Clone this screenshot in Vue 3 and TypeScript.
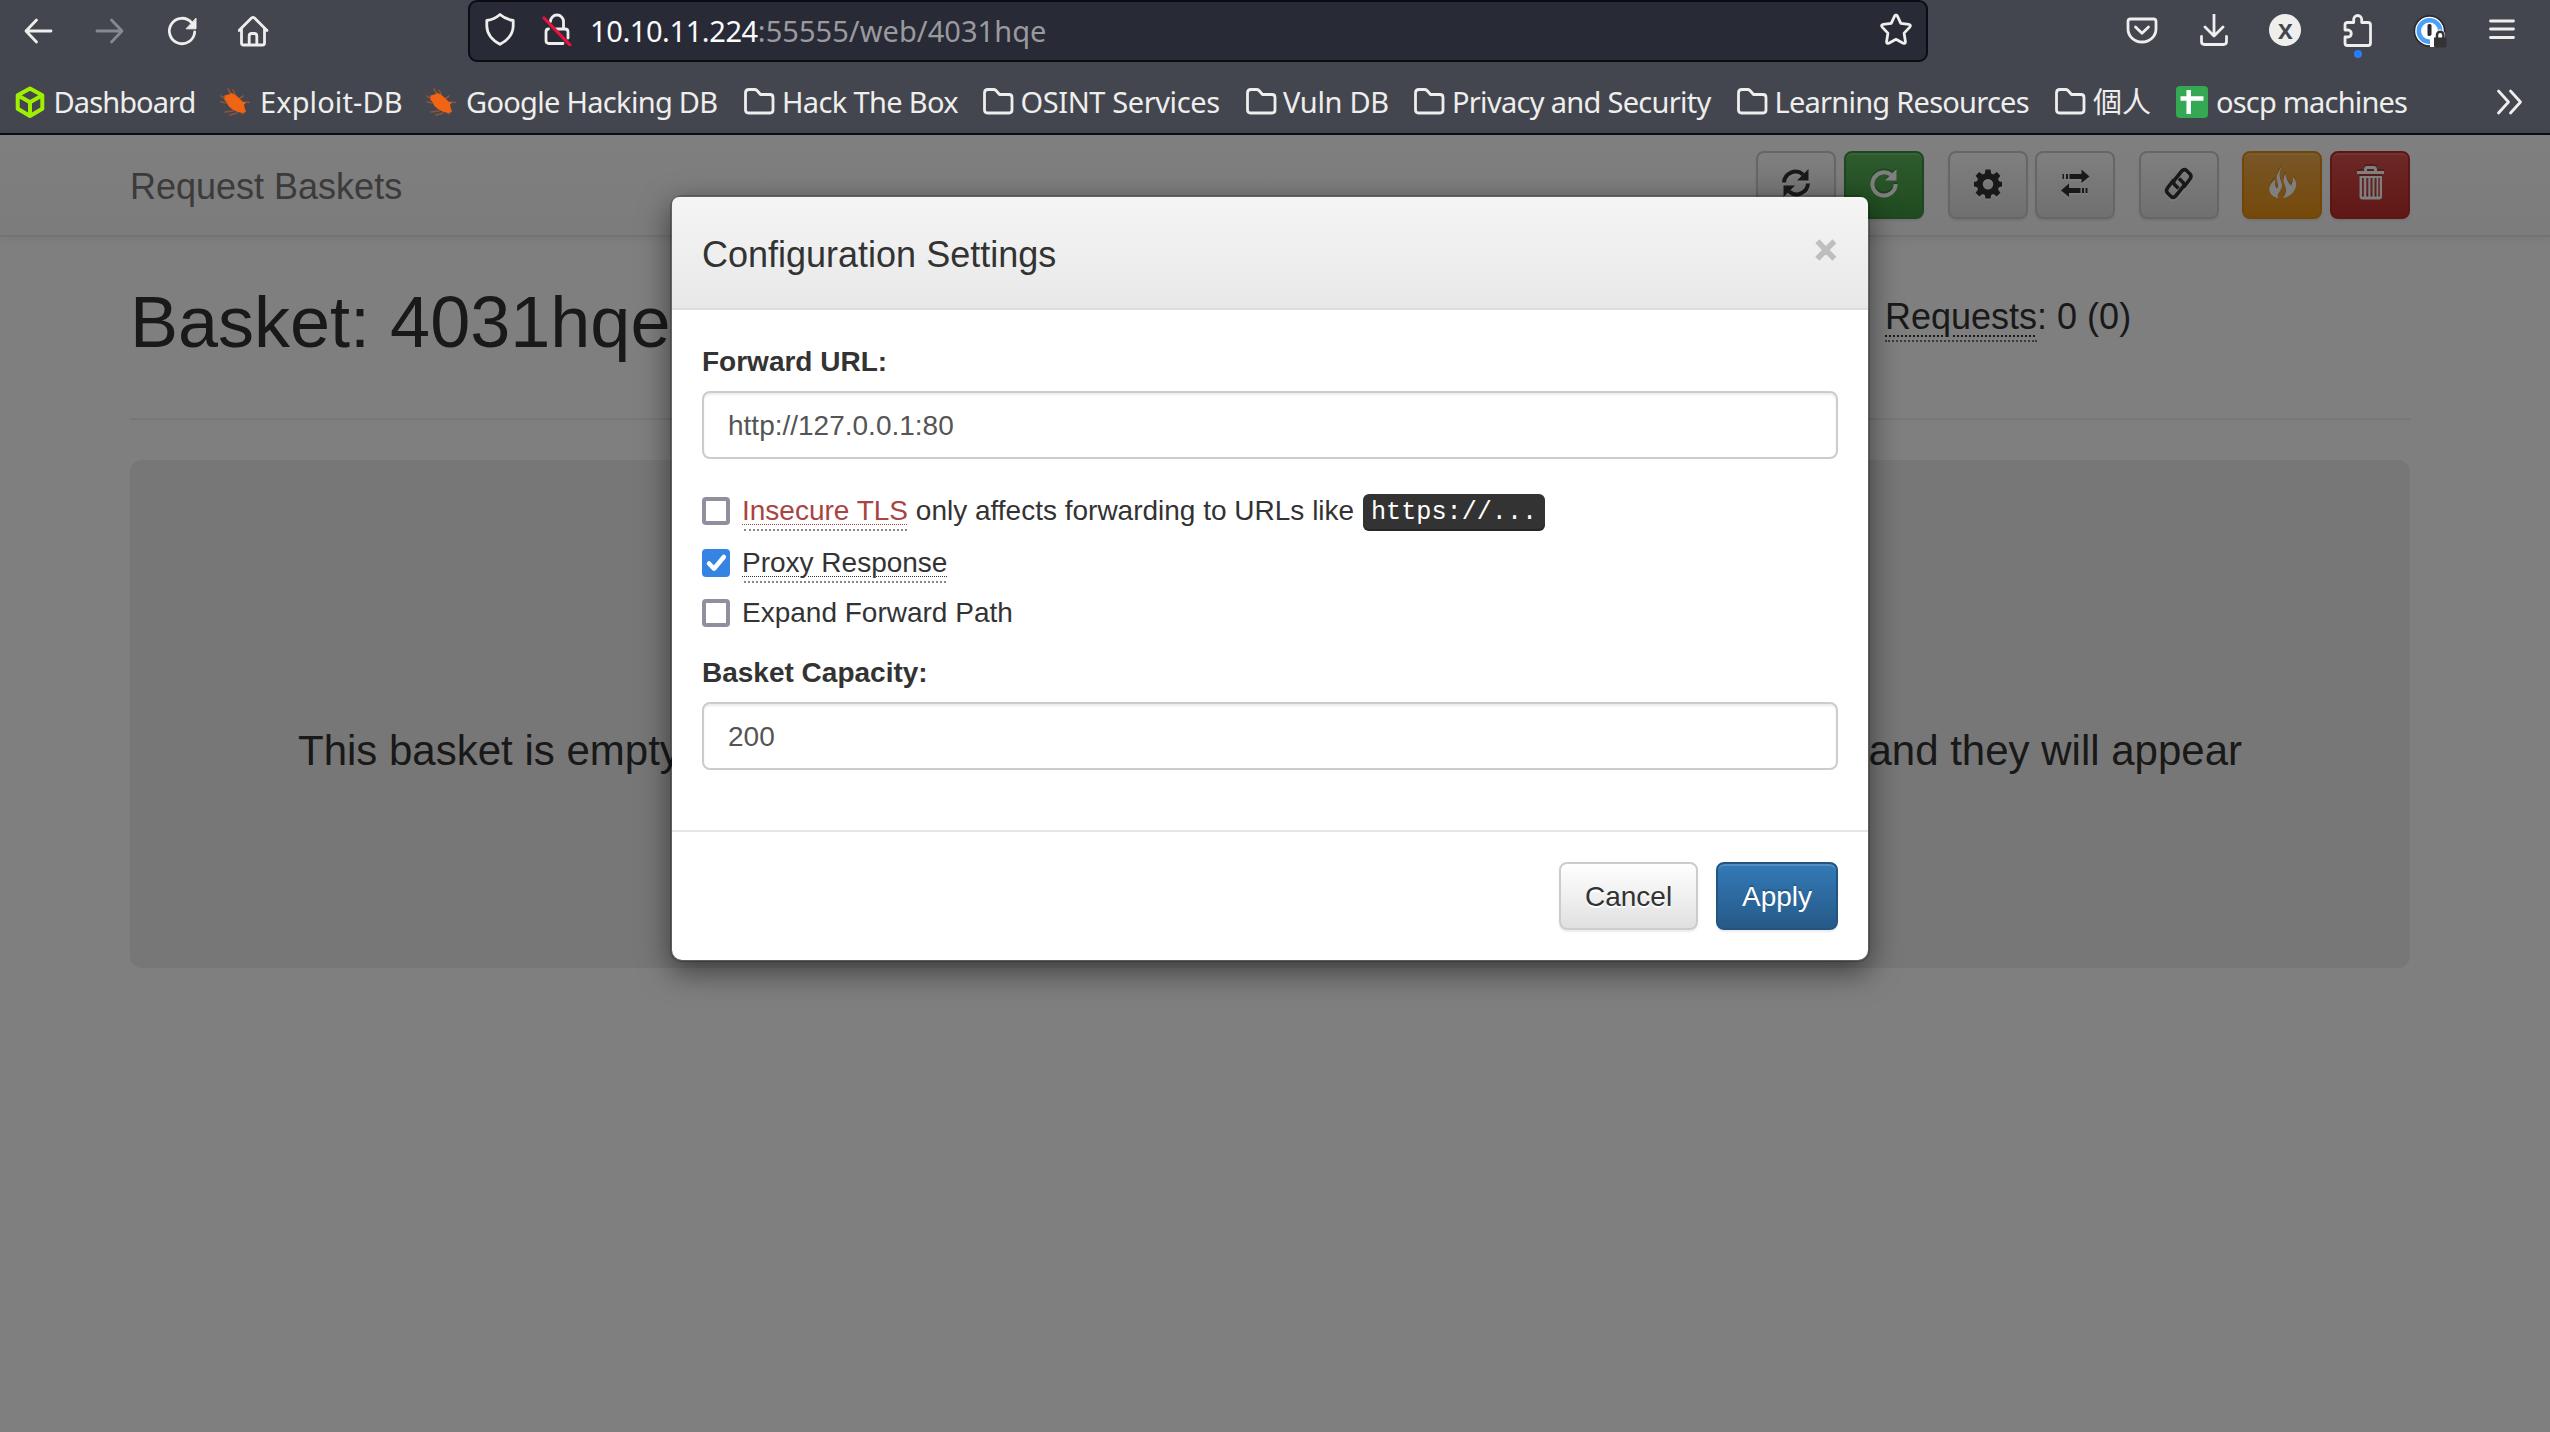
<script setup lang="ts">
import { ref } from 'vue'

interface Bookmark {
  label: string
  icon: 'cube' | 'bug' | 'folder' | 'sheet'
  width: number
  gap: number
  spacing: number
}

const bookmarks: Bookmark[] = [
  { label: 'Dashboard', icon: 'cube', width: 204, gap: 7.5, spacing: -0.9 },
  { label: 'Exploit-DB', icon: 'bug', width: 206, gap: 10, spacing: 0.1 },
  { label: 'Google Hacking DB', icon: 'bug', width: 319, gap: 10, spacing: -0.7 },
  { label: 'Hack The Box', icon: 'folder', width: 239, gap: 7, spacing: -0.65 },
  { label: 'OSINT Services', icon: 'folder', width: 263, gap: 6.5, spacing: -0.4 },
  { label: 'Vuln DB', icon: 'folder', width: 168, gap: 6, spacing: -0.3 },
  { label: 'Privacy and Security', icon: 'folder', width: 323, gap: 7, spacing: -0.7 },
  { label: 'Learning Resources', icon: 'folder', width: 318, gap: 6.5, spacing: -0.75 },
  { label: '個人', icon: 'folder', width: 122, gap: 7, spacing: 0 },
  { label: 'oscp machines', icon: 'sheet', width: 240, gap: 8, spacing: -0.8 },
]

const forwardUrl = ref('http://127.0.0.1:80')
const capacity = ref('200')
const insecureTls = ref(false)
const proxyResponse = ref(true)
const expandPath = ref(false)
</script>

<template>
  <div class="window">
    <header class="chrome">
      <div class="toolbar">
        <div class="nav">
          <svg width="32" height="32" viewBox="0 0 32 32"><path d="M29 16H4M14.500 5L4 16l10.500 11" /></svg>
          <svg class="dim" width="32" height="32" viewBox="0 0 32 32"><path d="M3 16h25M17.500 5L28 16 17.500 27" /></svg>
          <svg width="32" height="32" viewBox="0 0 32 32"><path d="M25.500 7.500A12.700 12.700 0 1 0 28.700 17" /><path class="solid" d="M30 3.500v10.300h-9.600z" /></svg>
          <svg width="32" height="32" viewBox="1 0 32 32"><path d="M2 15.500L14.500 3q1.500-1.300 3 0L30 15.500M4.500 13.500V28q0 2 2 2h19q2 0 2-2V13.500M12.200 30V21q0-2.500 2.500-2.500h2.600q2.500 0 2.500 2.500v9" /></svg>
        </div>
        <div class="urlbar">
          <svg class="shield" width="32" height="34" viewBox="0 0 32 34"><path d="M16 2.500c4 3.500 8 5.200 13.200 6v5.500C29 22 25 27.500 16 32.300 7 27.500 3 22 2.800 14V8.500C8 7.700 12 6 16 2.500z" /></svg>
          <svg class="lock" width="32" height="34" viewBox="0 0 32 34"><path d="M9.500 9.500a6.500 6.500 0 0 1 13 0V16M15 17h9q3 0 3 3v6M22 31.500H8q-3 0-3-3V20q0-3 2.500-3" /><path class="strike" d="M3 6l26 27" /></svg>
          <div class="url"><b>10.10.11.224</b><span>:55555/web/4031hqe</span></div>
          <svg class="star" width="34" height="34" viewBox="0 0 34 34"><path d="M15.700 3.800q1.300-2 2.600 0l3.500 7.600 8 1q2.600.5 1 2.700l-5.700 6 1.300 8.400q.2 2.500-2.200 1.700L17 27.300l-7.200 3.900q-2.400.8-2.200-1.700l1.300-8.400-5.700-6q-1.600-2.200 1-2.700l8-1z" /></svg>
        </div>
        <div class="tools">
          <svg width="34" height="34" viewBox="0 0 34 34"><path d="M5.500 5h23q2.500 0 2.500 2.500v7.500a14 13 0 0 1-28 0V7.500q0-2.500 2.500-2.500zM10.500 13l6.500 6.300 6.500-6.300" /></svg>
          <svg width="34" height="34" viewBox="0 0 34 34"><path d="M17 .500V22M8 13l9 9 9-9M4.500 22.500v5q0 3 3 3h19q3 0 3-3v-5" /></svg>
          <div class="badge">X</div>
          <svg width="34" height="34" viewBox="0 0 34 34"><path d="M4 16V11q0-2.500 2.500-2.500h6.200V5.500a4 4 0 0 1 8 0v3h6.300q2.500 0 2.500 2.500v18q0 2.500-2.500 2.500H6.500q-2.500 0-2.500-2.500v-6h3.500a3.600 3.600 0 0 0 0-7z" /></svg>
          <svg width="34" height="34" viewBox="0 0 34 34">
            <circle class="k" cx="16.500" cy="17" r="16" /><circle class="w" cx="16.500" cy="17" r="14.300" />
            <circle class="ring" cx="16.500" cy="17" r="10.700" /><rect class="k" x="14.500" y="10" width="4" height="12" rx="1.500" />
            <path class="w" d="M17 33V22l4-3 6-4 5 4v14z" /><path class="k" d="M21 23.500h12.500V32q0 1.500-1.500 1.500h-9.500q-1.500 0-1.500-1.500z" /><path class="shackle" d="M24 24v-3a3.200 3.200 0 0 1 6.400 0v3" />
          </svg>
          <svg width="34" height="34" viewBox="0 0 34 34"><path d="M5.500 7h23M5.500 15h23M5.500 23.500h23" /></svg>
          <i class="dot"></i>
        </div>
      </div>
      <nav class="bookmarks">
        <div v-for="b in bookmarks" :key="b.label" class="bookmark" :style="{ width: b.width + 'px' }">
          <svg v-if="b.icon === 'cube'" class="cube" width="32" height="34" viewBox="0 0 32 34"><path d="M16 3.500l12.300 6.800v13.500L16 31 3.700 23.800V10.300zM3.700 10.300L16 17.300l12.300-7M16 17.300V31" /></svg>
          <svg v-else-if="b.icon === 'bug'" class="bug" width="32" height="34" viewBox="0 0 32 34"><path class="legs" d="M10 4l3 5M15 5l2 4M3 11l5 3M7 27l8-1M12 30l7-2M25 11l-4 3M27 17l5 .5M25 29l-3-3M3 17l6 1" /><path class="body" d="M6.500 10.500l4-1 3-1.500 3.500 1.500 4.500 4 3 3 3.500 1-2 2.500 1 4 1 2.500-2 1.500-4-.500-3.500-1-4-2-4-3.500-2-4-2-2z" /></svg>
          <svg v-else-if="b.icon === 'folder'" class="folder" width="32" height="34" viewBox="0 0 32 34"><path d="M2.500 8q0-3.500 3.500-3.500h5.500q1.500 0 2.500 1l3.500 4H27q3 0 3 3V25q0 3-3 3H5.500q-3 0-3-3z" /></svg>
          <svg v-else class="sheet" width="32" height="34" viewBox="0 0 32 34"><rect y="1" width="32" height="32" rx="4" /><path d="M12.700 5v24M4.500 13.500h23" /></svg>
          <span :style="{ marginLeft: b.gap + 'px', letterSpacing: b.spacing + 'px' }">{{ b.label }}</span>
        </div>
        <svg class="more" width="30" height="30" viewBox="0 0 30 30"><path d="M3.500 4l10 11-10 11M15.500 4l10 11-10 11" /></svg>
      </nav>
    </header>

    <main class="page">
      <div class="navbar">
        <span class="brand">Request Baskets</span>
        <div class="actions">
          <button class="btn icon"><svg viewBox="0 0 32 32"><path class="ln" d="M4 15.500A11.500 11.500 0 0 1 23 7.500M28 16.500A11.500 11.500 0 0 1 9 24.500" /><path d="M28.500 2v11.500H17zM3.500 30V18.500H15z" /></svg></button>
          <button class="btn icon success"><svg viewBox="0 0 32 32"><path class="ln" d="M23 7.700A11.600 11.600 0 1 0 27.600 17" /><path d="M28.500 2v11.500H17z" /></svg></button>
          <button class="btn icon g24"><svg viewBox="0 0 32 32"><path fill-rule="evenodd" d="M13.500 2.500h5l.7 4 2.300 1 3.300-2.400 3.600 3.600L26 12l1 2.300 3 .7v4.500l-3 .7-1 2.300 2.400 3.300-3.600 3.600-3.300-2.400-2.300 1-.7 3.500h-5l-.7-3.500-2.300-1-3.300 2.400-3.600-3.600L6 22.500l-1-2.300-3-.7V15l3-.7L6 12 3.600 8.700l3.600-3.600L10.500 7.500l2.300-1zM16 12a5 5 0 1 0 0 10.500A5 5 0 0 0 16 12z" /></svg></button>
          <button class="btn icon g7"><svg viewBox="0 0 32 32"><path d="M22.500 2.500l8 7-8 6.500v-4H10.500V7h12zM3.500 7H5v5H3.500zM7 7h2v5H7zM10 16.500l-8 7 8 6.500v-4h11.500v-5H10zM23 21h2v5h-2zM26.500 21h2v5h-2z" /></svg></button>
          <button class="btn icon g24"><svg viewBox="0 0 32 32"><path class="link" d="M20.500 20.500l6.500-8.500q2-2.800 0-5l-3.500-3.500q-2.500-2-4.700.500l-7.300 9q-1.800 2.500 0 4.500l4 4" /><path class="link" d="M11 12.500L4.500 21q-2 2.800 0 5L8 29.500q2.500 2 4.700-.500l7.300-9q1.800-2.500 0-4.500l-4-4" /></svg></button>
          <button class="btn icon warning g23"><svg viewBox="0 0 32 32"><path d="M15.500 0c-5 7-5.500 11-4 15 .8 2.500 1 4.500-.500 6.500-2-2-2.500-5-2-9.500C5 16 3 19 3.300 22.500 3.600 27 7.500 30.500 12.500 31c-1.500-2-1-3.500.800-6 3-4 3.500-7 1.500-11.500-1.800-4.500-1.500-8 .7-13.500zM19.500 6.500c-1.500 3-2.500 6-1.500 9.500 1 3 2.500 5 2 8-.4 2.500-1.500 4.500-3 7 6.500-1 12-6 13-12 .5-3.500-.5-6.500-3-9.500.3 4-.5 6.500-2 9-3-3-4.500-6.500-5.500-12z" /></svg></button>
          <button class="btn icon danger g8"><svg viewBox="0 0 32 32"><path class="ln3" d="M3 5.500h27M11.500 5V2.500q0-2 2-2h6q2 0 2 2V5" /><path fill-rule="evenodd" d="M5.500 9H28v20.500q0 3-3 3H8.500q-3 0-3-3zM8 11v18.500h1.800V11zM12.300 11v18.500h2V11zM16.500 11v18.500h2V11zM20.500 11v18.500h2V11zM24.300 11v18.500h1.500V11z" /></svg></button>
        </div>
      </div>
      <div class="container">
        <div class="heading">
          <h1>Basket: 4031hqe</h1>
          <div class="count"><span class="abbr">Requests</span>: 0 (0)</div>
        </div>
        <div class="jumbotron">
          <div class="line"><span>This basket is empty, send requests to</span><span>http://10.10.11.224:55555/4031hqe</span><span>and they will appear</span></div>
        </div>
      </div>

      <div class="backdrop">
        <section class="modal">
          <div class="modal-head">
            <h4>Configuration Settings</h4>
            <button class="close">×</button>
          </div>
          <div class="modal-body">
            <label class="title">Forward URL:</label>
            <input v-model="forwardUrl" class="field" type="text" />
            <div class="checks">
              <label class="check"><i class="box" :class="{ on: insecureTls }"></i><span><span class="abbr red">Insecure TLS</span> only affects forwarding to URLs like <kbd>https://...</kbd></span></label>
              <label class="check tall"><i class="box" :class="{ on: proxyResponse }"><svg v-if="proxyResponse" viewBox="0 0 28 28"><path d="M7 14.500l5 5.200L21.800 8" /></svg></i><span><span class="abbr">Proxy Response</span></span></label>
              <label class="check"><i class="box" :class="{ on: expandPath }"></i><span>Expand Forward Path</span></label>
            </div>
            <label class="title">Basket Capacity:</label>
            <input v-model="capacity" class="field" type="text" />
          </div>
          <div class="modal-foot">
            <button class="btn">Cancel</button>
            <button class="btn primary">Apply</button>
          </div>
        </section>
      </div>
    </main>
  </div>
</template>

<style>
body { overflow: hidden; background: #fff; }
</style>

<style scoped>
* { box-sizing: border-box; }
.window { width: 2550px; height: 1432px; display: flex; flex-direction: column; overflow: hidden; font-family: "Liberation Sans", Arial, sans-serif; color: #333; }
svg { display: block; flex: none; }

/* browser chrome */
.chrome { height: 135px; flex: none; background: #44464f; border-bottom: 2px solid #0c0c12; color: #eeeeec; font-family: "Noto Sans", "Noto Sans CJK TC", sans-serif; }
.chrome path { fill: none; stroke: #eeeeec; stroke-width: 2.8; stroke-linecap: round; stroke-linejoin: round; }
.toolbar { height: 62px; display: flex; align-items: flex-start; }
.nav { width: 468px; padding: 15px 0 0 22px; display: flex; gap: 40px; }
.nav .dim { opacity: .4; }
.chrome path.solid { fill: #eeeeec; stroke-width: 1; }
.urlbar { width: 1460px; height: 62px; display: flex; background: #282a36; border: 2px solid #0c0c12; border-radius: 9px; padding: 10px 13px 0 14px; }
.lock { margin-left: 25px; }
.chrome .lock .strike { stroke: #e8133c; stroke-width: 3.2; }
.url { margin-left: 17px; margin-top: -1px; font-size: 29px; line-height: 40px; color: #9a9a9e; flex: 1; white-space: pre; }
.url b { font-weight: 400; color: #fbfbfe; letter-spacing: -.4px; }
.url span { letter-spacing: .05px; }
.tools { position: relative; width: 622px; display: flex; padding: 14px 0 0 197px; gap: 38.200px; }
.badge { width: 32px; height: 32px; margin: 0 1px 0 0; border-radius: 50%; background: #eeeeec; color: #44464f; font-size: 22px; font-weight: 700; line-height: 33px; text-align: center; }
.dot { position: absolute; left: 426px; top: 50px; width: 8px; height: 8px; border-radius: 50%; background: #2a7cff; }
.k { fill: #2b2b2f; }
.chrome path.k { fill: #333; stroke: none; }
.w { fill: #fff; }
.chrome path.w { fill: #fff; stroke: none; }
.ring { fill: none; stroke: #4aa0f8; stroke-width: 4.500; }
.chrome path.shackle { stroke: #333; stroke-width: 2.500; }

.bookmarks { height: 71px; padding: 0 25px 0 14px; display: flex; align-items: flex-start; }
.bookmark { flex: none; display: flex; padding-top: 23px; font-size: 29px; line-height: 36px; white-space: pre; }
.bookmark span { margin-top: -1px; }
.chrome .cube path { stroke: #9fef00; stroke-width: 4; }
.chrome .bug .body { fill: #f06414; stroke: none; }
.chrome .bug .legs { stroke: #8d5438; stroke-width: 1.600; }
.sheet rect { fill: #34a853; }
.chrome .sheet path { stroke: #fff; stroke-width: 4.500; stroke-linecap: butt; }
.more { margin: 25px 0 0 auto; }

/* page */
.page { position: relative; flex: 1; background: #fff; }
.navbar { height: 102px; padding: 16px 140px 0 130px; display: flex; justify-content: space-between; background: linear-gradient(#fff, #f8f8f8); border-bottom: 2px solid #e7e7e7; box-shadow: 0 2px 10px rgba(0, 0, 0, .075); }
.brand { font-size: 36px; line-height: 40px; margin-top: 16px; color: #777; }
.actions { display: flex; gap: 0; }
.btn { height: 68px; padding: 2px 24px 0; border: 2px solid #ccc; border-radius: 8px; background: linear-gradient(#fff, #e0e0e0); box-shadow: inset 0 2px 0 rgba(255, 255, 255, .15), 0 2px 2px rgba(0, 0, 0, .075); font: 28px/62px "Liberation Sans", Arial, sans-serif; color: #333; text-shadow: 0 2px 0 #fff; }
.icon { width: 80px; padding: 0 0 4px; display: flex; align-items: center; justify-content: center; margin-left: 8px; }
.icon svg { width: 32px; height: 32px; fill: currentColor; filter: drop-shadow(0 2px 0 rgba(255, 255, 255, .8)); overflow: visible; }
.g24 { margin-left: 24px; } .g23 { margin-left: 23px; } .g7 { margin-left: 7px; }
.ln { fill: none; stroke: currentColor; stroke-width: 4; }
.ln3 { fill: none; stroke: currentColor; stroke-width: 3; }
.link { fill: none; stroke: currentColor; stroke-width: 3.600; }
.success, .warning, .danger, .primary { color: #fff; text-shadow: 0 -2px 0 rgba(0, 0, 0, .2); }
.success svg, .warning svg, .danger svg { filter: drop-shadow(0 -2px 0 rgba(0, 0, 0, .2)); }
.success { background: linear-gradient(#5cb85c, #419641); border-color: #3e8f3e; }
.warning { background: linear-gradient(#f0ad4e, #eb9316); border-color: #e38d13; }
.danger { background: linear-gradient(#d9534f, #c12e2a); border-color: #b92c28; }
.primary { background: linear-gradient(#337ab7, #265a88); border-color: #245580; }

.container { width: 2280px; margin-left: 130px; }
.heading { height: 183px; display: flex; justify-content: space-between; border-bottom: 2px solid #eee; }
h1 { margin: 45px 0 0; font-size: 72px; font-weight: 400; line-height: 80px; }
.count { width: 525px; margin-top: 60px; font-size: 36px; line-height: 40px; }
.abbr { position: relative; text-decoration: underline dotted 2px; text-underline-offset: 6px; }
.abbr::after { content: ""; position: absolute; left: 0; right: 0; bottom: -5px; border-bottom: 2px dotted #777; }
.jumbotron { height: 508px; margin-top: 40px; padding: 261px 168px 0 168px; border-radius: 12px; background: #eee; }
.line { display: flex; justify-content: space-between; font-size: 42px; line-height: 60px; white-space: nowrap; }

/* dialog */
.backdrop { position: absolute; inset: 0; background: rgba(0, 0, 0, .5); padding-top: 60px; }
.modal { width: 1200px; margin-left: 670px; background: #fff; background-clip: padding-box; border: 2px solid rgba(0, 0, 0, .2); border-radius: 12px; box-shadow: 0 10px 30px rgba(0, 0, 0, .5); }
.modal-head { height: 113px; padding: 0 33px 0 30px; display: flex; justify-content: space-between; background: linear-gradient(#f5f5f5, #e8e8e8); border-bottom: 2px solid #ddd; border-radius: 7px 7px 0 0; }
h4 { margin: 38px 0 0; font-size: 36px; font-weight: 400; line-height: 40px; }
.close { margin: 32px -2px 0 0; padding: 0; height: 42px; border: 0; background: none; font: 700 38px/42px "Liberation Sans", Arial, sans-serif; color: #000; -webkit-text-stroke: 1.500px #000; opacity: .2; }
.modal-body { height: 520px; padding: 32px 30px 0; font-size: 28px; }
.title { display: block; font-weight: 700; line-height: 40px; margin-bottom: 9px; }
.field { display: block; width: 100%; height: 68px; padding: 2px 24px 0; border: 2px solid #ccc; border-radius: 8px; font: 28px "Liberation Sans", Arial, sans-serif; color: #555; background: #fff; box-shadow: inset 0 2px 2px rgba(0, 0, 0, .075); outline: 0; }
.checks { padding-top: 32px; height: 194px; line-height: 40px; }
.check { display: flex; height: 52px; }
.check.tall { height: 50px; }
.box { width: 28px; height: 28px; margin: 6px 12px 0 0; border: 4px solid #8f8f9d; border-radius: 4px; background: #fff; }
.box.on { border: 0; background: #3584e4; }
.box path { fill: none; stroke: #fff; stroke-width: 4.500; stroke-linecap: round; stroke-linejoin: round; }
.check .abbr { text-decoration-thickness: 1px; text-underline-offset: 4px; }
.check .abbr::after { left: 2px; right: 1px; bottom: -5px; border-color: #888; }
.red { color: #a94442; }
kbd { position: relative; top: -1px; display: inline-block; height: 37px; margin-left: 1px; padding: 5px 8px 4px; border-radius: 6px; background: #333; color: #fff; font: 25.200px/28px "Liberation Mono", monospace; box-shadow: inset 0 -2px 0 rgba(0, 0, 0, .25); vertical-align: baseline; }
.modal-foot { height: 130px; padding: 30px; display: flex; justify-content: flex-end; gap: 18px; border-top: 2px solid #e5e5e5; }
.modal-foot .btn { width: 139px; }
.modal-foot .primary { width: 122px; padding: 2px 0 0; }
</style>
